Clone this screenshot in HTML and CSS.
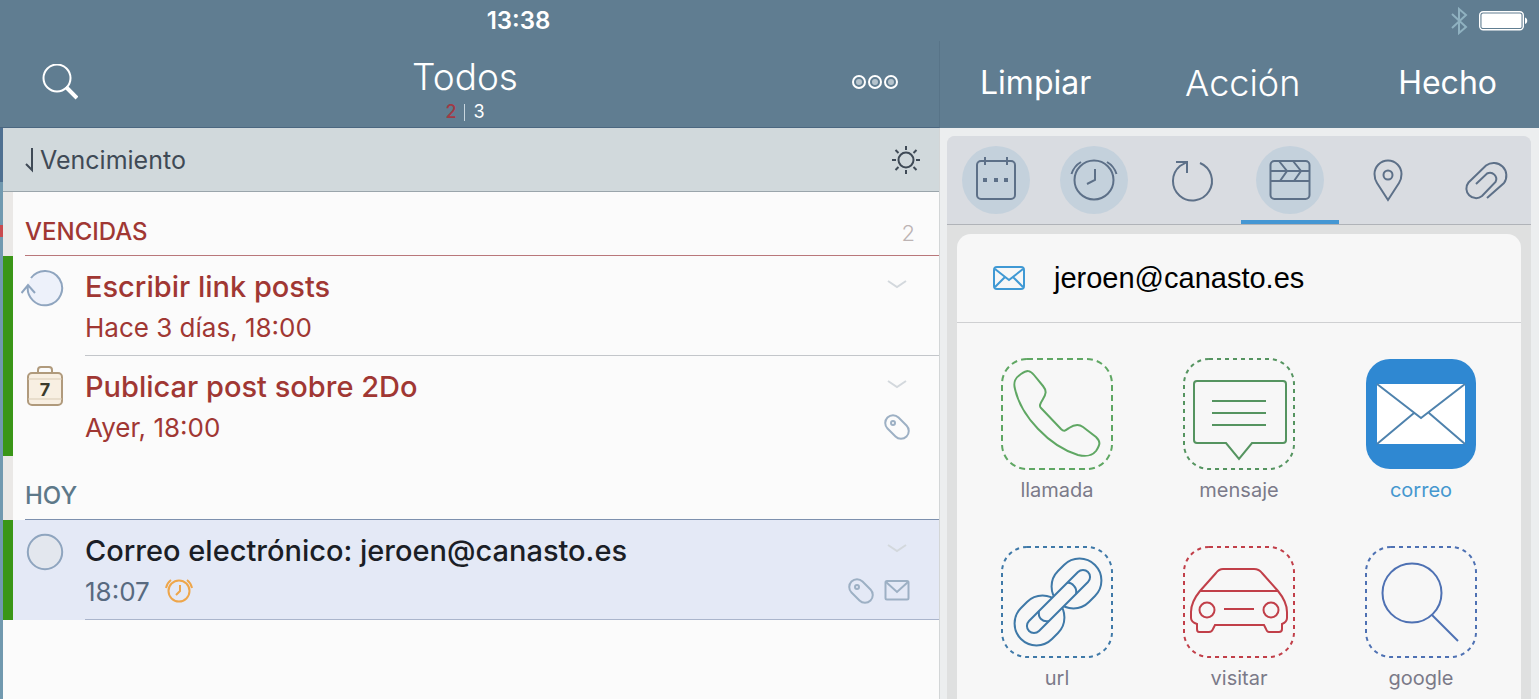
FILE: index.html
```html
<!DOCTYPE html>
<html lang="es">
<head>
    <meta charset="UTF-8">
    <meta name="viewport" content="width=device-width, initial-scale=1">
    <title>Todos</title>
    <link rel="stylesheet" href="styles.css">
</head>
<body>
    <header class="top">
        <div class="status">
            <time>13:38</time>
            <div class="status-icons">
                <svg width="18" height="28" viewBox="0 0 18 28" class="bluetooth"><path d="M2 7L16 20L9 26V2L16 8L2 21"/></svg>
                <svg width="49" height="20" viewBox="0 0 49 20">
                    <rect x="0.7" y="0.7" width="43.6" height="18" rx="3.5" fill="none" stroke="#fff" stroke-width="1.4"/>
                    <rect x="2.5" y="2.5" width="40" height="14.5" rx="1.5" fill="#fff"/>
                    <path d="M46 6.5C49 7 49 12.500 46 13Z" fill="#fff"/>
                </svg>
            </div>
        </div>
        <div class="navs">
            <div class="nav nav-list">
                <button aria-label="Buscar"><svg width="36" height="36" viewBox="0 0 36 36"><circle cx="15" cy="14" r="13.500" stroke-width="2"/><path d="M24 23L35 34" stroke-width="4"/></svg></button>
                <div class="heading">
                    <h1>Todos</h1>
                    <p class="counts"><b>2</b><i></i><span>3</span></p>
                </div>
                <button aria-label="Más"><svg width="46" height="16" viewBox="0 0 46 16" class="dots">
                    <circle cx="7" cy="8" r="6"/><circle cx="23" cy="8" r="6"/><circle cx="39" cy="8" r="6"/>
                    <path d="M7 8h0M23 8h0M39 8h0"/>
                </svg></button>
            </div>
            <div class="nav nav-detail">
                <button>Limpiar</button>
                <h2>Acción</h2>
                <button>Hecho</button>
            </div>
        </div>
    </header>

    <main>
        <div class="edge"></div>
        <section class="list">
            <div class="sort">
                <button class="sort-by"><svg width="9" height="26" viewBox="0 0 9 26"><path d="M7 1V23L1 17"/></svg>Vencimiento</button>
                <button aria-label="Brillo"><svg width="30" height="30" viewBox="0 0 30 30">
                    <circle cx="15" cy="15" r="7.500"/>
                    <path d="M15 1v4M15 25v4M1 15h4M25 15h4M4.500 5l3 3M22.500 22l3 3M25.500 5l-3 3M7.500 22l-3 3"/>
                </svg></button>
            </div>

            <div class="group late">
                <h3><span>VENCIDAS</span><small>2</small></h3>
            </div>
            <article class="task late">
                <svg class="mark" width="44" height="44" viewBox="0 0 44 44">
                    <circle cx="24" cy="22" r="17" fill="#edf1fa" stroke="none"/>
                    <path d="M10 12A17.200 17.200 0 1 1 7 19M0.500 27L7 19L14 27"/>
                </svg>
                <div class="body">
                    <div class="line title"><h4>Escribir link posts</h4><button class="more" aria-label="Abrir"><svg width="20" height="10" viewBox="0 0 20 10"><path d="M1 1L10 7L19 1"/></svg></button></div>
                    <div class="line meta"><p>Hace 3 días, 18:00</p></div>
                </div>
            </article>
            <article class="task late last">
                <svg class="mark case" width="44" height="44" viewBox="0 0 44 44">
                    <rect x="7" y="7" width="34" height="32" rx="4"/>
                    <path d="M17 7V4Q17 1 20 1H28Q31 1 31 4V7"/>
                    <path class="thin" d="M7 13H41M7 33H41"/>
                    <text x="24" y="30">7</text>
                </svg>
                <div class="body">
                    <div class="line title"><h4>Publicar post sobre 2Do</h4><button class="more" aria-label="Abrir"><svg width="20" height="10" viewBox="0 0 20 10"><path d="M1 1L10 7L19 1"/></svg></button></div>
                    <div class="line meta"><p>Ayer, 18:00</p>
                        <svg width="26" height="26" viewBox="0 0 26 26"><path d="M3.500 14.500A7.600 7.600 0 0 1 14.500 3.500L22.500 11.500A7.600 7.600 0 0 1 11.500 22.500Z"/><circle cx="9" cy="9" r="2"/></svg>
                    </div>
                </div>
            </article>

            <div class="group today">
                <h3><span>HOY</span></h3>
            </div>
            <article class="task selected">
                <svg class="mark" width="44" height="44" viewBox="0 0 44 44"><circle cx="24" cy="22" r="17.200" fill="#e3e7ee"/></svg>
                <div class="body">
                    <div class="line title"><h4>Correo electrónico: jeroen@canasto.es</h4><button class="more" aria-label="Abrir"><svg width="20" height="10" viewBox="0 0 20 10"><path d="M1 1L10 7L19 1"/></svg></button></div>
                    <div class="line meta"><p>18:07</p>
                        <svg class="alarm" width="30" height="26" viewBox="0 0 30 26"><circle cx="15" cy="13" r="10.500"/><path d="M16 7V13L12 17M2 10Q3 5 7 2M28 10Q27 5 23 2"/></svg>
                        <svg class="push" width="26" height="26" viewBox="0 0 26 26"><path d="M3.500 14.500A7.600 7.600 0 0 1 14.500 3.500L22.500 11.500A7.600 7.600 0 0 1 11.500 22.500Z"/><circle cx="9" cy="9" r="2"/></svg>
                        <svg width="26" height="26" viewBox="0 0 26 26"><rect x="1.500" y="3" width="23" height="18.500" rx="1.500"/><path d="M2 4L13 14L24 4"/></svg>
                    </div>
                </div>
            </article>
        </section>

        <aside class="detail">
            <nav class="tabs">
                <button class="set" aria-label="Fecha"><svg width="68" height="68" viewBox="0 0 68 68">
                    <rect x="15" y="15" width="38" height="38" rx="4"/><path d="M23 11V19M45 11V19"/><path d="M21 34h4M32 34h4M42 34h4" stroke-width="4"/>
                </svg></button>
                <button class="set" aria-label="Alarma"><svg width="68" height="68" viewBox="0 0 68 68">
                    <circle cx="34" cy="34" r="19.500"/><path d="M35 23V34L27 38M11.500 28Q14 20 21 16M56.500 28Q54 20 47 16"/>
                </svg></button>
                <button aria-label="Repetir"><svg width="68" height="68" viewBox="0 0 68 68"><path d="M42 17A19.500 19.500 0 1 1 22 20L29 16M18 16H29V27"/></svg></button>
                <button class="set active" aria-label="Acción"><svg width="68" height="68" viewBox="0 0 68 68">
                    <rect x="14.500" y="15" width="39" height="38" rx="4"/><path d="M15 25H53M15 35H53M23 15L31 25L24 35M37 15L45 25L38 35"/>
                </svg></button>
                <button aria-label="Lugar"><svg width="68" height="68" viewBox="0 0 68 68"><path d="M34 54L23 37C21 34 20.500 32 20.500 28a13.500 13.500 0 0 1 27 0c0 4-0.500 6-2.500 9Z"/><circle cx="34" cy="29" r="4.500"/></svg></button>
                <button aria-label="Adjuntos"><svg width="68" height="68" viewBox="0 0 68 68"><path d="M34 52L51 37A12.700 12.700 0 0 0 33 19.500L15.500 36.500A9.600 9.600 0 0 0 29 50L42.500 36A6.300 6.300 0 0 0 34 27.500L23 38"/></svg></button>
            </nav>

            <div class="card">
                <div class="mail">
                    <svg width="34" height="26" viewBox="0 0 34 26"><rect x="2" y="2" width="30" height="22" rx="3"/><path d="M3 4L17 15L31 4M3 22L13 12M31 22L21 12"/></svg>
                    <span>jeroen@canasto.es</span>
                </div>
                <div class="actions">
                    <button class="call"><svg width="112" height="112" viewBox="0 0 112 112">
                        <rect class="frame" x="1" y="1" width="110" height="110" rx="25"/>
                        <path d="M14 31C12 24 14 20 20 16C26 12 29 12 33 17L42 28C46 33 45 36 42 41C39 46 38 48 40 50L60 71C63 74 64 73 68 70C74 66 78 66 82 69L95 79C100 84 99 87 95 93C91 98 86 99 77 97C48 88 20 58 14 31Z"/>
                    </svg>llamada</button>
                    <button class="message"><svg width="112" height="112" viewBox="0 0 112 112">
                        <rect class="frame" x="1" y="1" width="110" height="110" rx="25"/>
                        <path d="M14 23H100Q103 23 103 26V82Q103 85 100 85H69L56 101L43 85H14Q11 85 11 82V26Q11 23 14 23ZM29 43H83M29 55H83M29 67H83"/>
                    </svg>mensaje</button>
                    <button class="email"><svg width="112" height="112" viewBox="0 0 112 112">
                        <rect x="1" y="1" width="110" height="110" rx="24" fill="#2f88d2" stroke="none"/>
                        <rect x="12" y="26" width="88" height="60" fill="#fff" stroke="none"/>
                        <path d="M12 26L56 60L100 26M12 86L49 55M100 86L64 55"/>
                    </svg>correo</button>
                    <button class="url"><svg width="112" height="112" viewBox="0 0 112 112">
                        <rect class="frame" x="1" y="1" width="110" height="110" rx="25"/>
                        <path d="M63 19A21.900 21.900 0 0 1 94 50L88 56A21.900 21.900 0 0 1 57 25Z"/>
                        <path d="M26 56L20 62A21.900 21.900 0 0 0 51 93L57 87A21.900 21.900 0 0 0 26 56Z"/>
                        <path fill="#f7f7f7" d="M77 26A7 7 0 0 1 87 36L38 85A7 7 0 0 1 28 75Z"/>
                        <path d="M66 37Q70 36 73 40Q76 43 75 48M38 65Q37 70 40 73Q43 76 48 75"/>
                    </svg>url</button>
                    <button class="visit"><svg width="112" height="112" viewBox="0 0 112 112">
                        <rect class="frame" x="1" y="1" width="110" height="110" rx="25"/>
                        <path d="M17 45L33 27Q36 23 40 23H71Q76 23 79 27L95 45Q104 56 104 66V72Q104 76 99 78V83Q99 86 96 86H86Q84 86 83 83L81 79H32L30 83Q29 86 26 86H16Q14 86 14 83V78Q8 76 8 72V66Q8 56 17 45ZM17 45H95M41 63H71"/>
                        <circle cx="24" cy="64" r="7.500"/><circle cx="88" cy="64" r="7.500"/>
                    </svg>visitar</button>
                    <button class="google"><svg width="112" height="112" viewBox="0 0 112 112">
                        <rect class="frame" x="1" y="1" width="110" height="110" rx="25"/>
                        <circle cx="47" cy="47" r="29.500"/><path d="M67 69L93 95"/>
                    </svg>google</button>
                </div>
            </div>
        </aside>
    </main>
</body>
</html>
```

FILE: styles.css
```css
* {
    box-sizing: border-box;
}
body {
    margin: 0;
    min-height: 100vh;
    display: flex;
    flex-direction: column;
    background-color: #eceeef;
    font-family: Inter, "Liberation Sans", sans-serif;
}
h1, h2, h3, h4, p {
    margin: 0;
    font-weight: 400;
}
button {
    padding: 0;
    border: none;
    background: none;
    font: inherit;
    color: inherit;
    cursor: pointer;
}
svg {
    display: block;
    flex: none;
    fill: none;
    stroke: currentColor;
    stroke-width: 2;
}

/* top bar */
.top {
    background-color: #607d91;
    color: #fff;
}
.status {
    display: grid;
    grid-template-columns: 1037fr 502fr;
    align-items: center;
    height: 41px;
}
.status time {
    text-align: center;
    font-size: 24px;
    font-weight: 600;
}
.status-icons {
    display: flex;
    justify-content: flex-end;
    align-items: center;
    gap: 11px;
    padding-right: 11px;
}
.status-icons svg {
    stroke: none;
}
.status-icons .bluetooth {
    stroke: #8fb1c0;
}
.navs {
    display: grid;
    grid-template-columns: 940fr 599fr;
    height: 87px;
}
.nav {
    display: flex;
    justify-content: space-between;
    align-items: center;
}
.nav-list {
    padding: 0 41px 0 42px;
    border-right: 1px solid #587488;
    border-bottom: 1px solid #4b6780;
}
.nav-list button {
    margin-bottom: 4px;
}
.heading {
    text-align: center;
    padding-top: 16px;
}
.heading h1 {
    font-size: 37px;
    font-weight: 300;
    line-height: 40px;
}
.counts {
    display: flex;
    justify-content: center;
    align-items: center;
    gap: 8px;
    font-size: 18px;
    line-height: 30px;
}
.counts b {
    color: #a03a44;
    font-weight: 500;
}
.counts i {
    width: 1px;
    height: 17px;
    background-color: #c8d6de;
}
.dots path {
    stroke: #b5c3cc;
    stroke-width: 6;
    stroke-linecap: round;
}
.nav-detail {
    padding: 0 42px 4px 40px;
    font-size: 32px;
}
.nav-detail h2 {
    padding-right: 4px;
    font-size: 36px;
    font-weight: 300;
}

main {
    flex: 1;
    display: grid;
    grid-template-columns: 3px minmax(0, 937fr) minmax(0, 599fr);
}
.edge {
    background: linear-gradient(#4f7091 54px, #7199af 54px, #7199af 97px, #c94a4e 97px, #c94a4e 109px, #7199af 109px);
}

/* task list */
.list {
    background-color: #fbfbfb;
    border-right: 1px solid #d3d6d7;
}
.sort {
    display: flex;
    justify-content: space-between;
    align-items: center;
    height: 64px;
    padding: 0 18px 0 22px;
    background-color: #d1d9dc;
    border-bottom: 1px solid #9aa5ab;
    color: #3f4a56;
}
.sort-by {
    display: flex;
    align-items: center;
    gap: 6px;
    padding-top: 1px;
    font-size: 25px;
    font-weight: 400;
}
.group {
    border-left: 10px solid #eae8e6;
    padding-left: 12px;
}
.group h3 {
    display: flex;
    justify-content: space-between;
    align-items: center;
    height: 64px;
    padding: 16px 24px 0 0;
    border-bottom: 1px solid;
    font-size: 24px;
    font-weight: 500;
}
.group small {
    padding-top: 2px;
    font-size: 22px;
    font-weight: 300;
    color: #bdb4b4;
}
.group.late h3 {
    color: #a03733;
    border-color: #b9777a;
}
.group.today h3 {
    color: #5d7889;
    border-color: #7d90ae;
}
.task {
    display: flex;
    height: 100px;
    border-left: 10px solid #3a9617;
    color: #586a80;
}
.task .mark {
    margin: 10px 20px 0 8px;
    color: #8fa5bf;
}
.task .case {
    color: #b09a7c;
}
.case rect {
    fill: #f8efe2;
}
.case .thin {
    stroke: #d9cbb5;
    stroke-width: 1;
}
.case text {
    fill: #3b3a2c;
    stroke: none;
    font-size: 18px;
    font-weight: 700;
    text-anchor: middle;
}
.body {
    flex: 1;
    padding: 10px 29px 0 0;
    border-bottom: 1px solid #c3c6ca;
}
.last .body {
    border-bottom: none;
}
.line {
    display: flex;
    align-items: center;
    justify-content: space-between;
    height: 40px;
}
.line h4 {
    font-size: 29px;
    font-weight: 500;
    color: #1b1e26;
}
.meta {
    height: 42px;
    gap: 10px;
    font-size: 26px;
    color: #9db0c4;
}
.meta p {
    color: #586a80;
}
.more {
    padding: 0 3px 2px;
    color: #d3d8dd;
}
.late h4,
.late .meta p {
    color: #a03733;
}
.selected {
    background-color: #e4e9f6;
}
.selected .body {
    border-color: #aab5cc;
}
.meta .alarm {
    margin-left: 4px;
    color: #eea64b;
}
.meta .push {
    margin-left: auto;
}

/* detail panel */
.detail {
    display: flex;
    flex-direction: column;
    margin: 8px 8px 0 7px;
    border-radius: 8px 8px 0 0;
    background-color: #dfe0e0;
}
.tabs {
    display: grid;
    grid-template-columns: repeat(6, 16.8%);
    height: 89px;
    border-bottom: 1px solid #b0b3b8;
    border-radius: 8px 8px 0 0;
    background-color: #d9dce1;
    color: #5d7088;
}
.tabs button {
    display: flex;
    justify-content: center;
    align-items: flex-start;
    padding-top: 10px;
    border-bottom: 4px solid transparent;
}
.tabs .active {
    border-color: #4597d3;
}
.set svg {
    border-radius: 50%;
    background-color: #c4d1dc;
}
.card {
    flex: 1;
    margin: 9px 10px 0;
    border-radius: 14px 14px 0 0;
    background-color: #f7f7f7;
}
.mail {
    display: flex;
    align-items: center;
    gap: 28px;
    height: 89px;
    padding-left: 35px;
    border-bottom: 1px solid #cfd0d2;
    font-family: "Liberation Sans", Arial, sans-serif;
    font-size: 29px;
}
.mail svg {
    color: #4099d4;
}
.actions {
    display: grid;
    grid-template-columns: repeat(3, 1fr);
    row-gap: 36px;
    padding: 35px 9px 0;
    font-size: 20px;
    line-height: 40px;
    color: #7b7a89;
}
.actions button {
    display: flex;
    flex-direction: column;
    align-items: center;
}
.frame {
    stroke-dasharray: 4 4;
}
.call .frame {
    stroke-dasharray: 6 4;
}
.call svg {
    color: #5fa763;
}
.message svg {
    color: #559460;
}
.actions .email {
    color: #4597cf;
}
.email svg {
    color: #4e82ad;
}
.url svg {
    color: #3f79a8;
}
.visit svg {
    color: #c13f49;
}
.google svg {
    color: #4e71b3;
}
```
